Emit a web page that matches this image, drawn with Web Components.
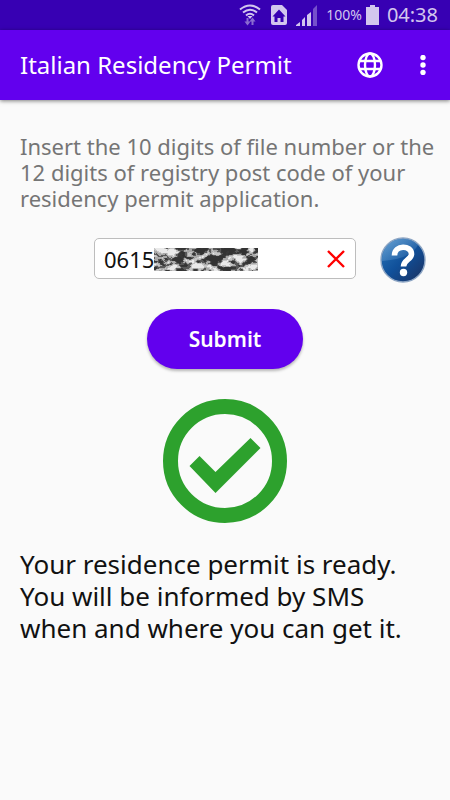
<!DOCTYPE html>
<html lang="en">
<head>
<meta charset="utf-8">
<meta name="viewport" content="width=device-width, initial-scale=1">
<title>Italian Residency Permit</title>
<style>
  html, body { margin: 0; min-height: 100%; background: #fafafa; }
  body { font-family: "Noto Sans", "Open Sans", sans-serif; color: #111; }
</style>
</head>
<body>
<permit-app></permit-app>
<script>
const define = (name, html) => customElements.define(name, class extends HTMLElement {
  constructor() {
    super();
    this.attachShadow({ mode: "open" }).innerHTML = html;
  }
});

define("status-bar", `
<style>
  :host { display: flex; align-items: center; justify-content: flex-end; height: 30px; padding-right: 12px; background: #3700b3; color: #d2c6ee; }
  svg { display: block; flex: none; }
  .wifi { margin-right: 10px; }
  .sim { margin-right: 9px; }
  .signal { margin-right: 9px; }
  .pct { font-size: 14px; line-height: 20px; }
  .battery { margin: 0 8px 0 4px; }
  time { font-size: 20px; line-height: 30px; }
</style>
<svg class="wifi" width="22" height="24" viewBox="0 0 22 24" fill="none" stroke="currentColor" stroke-width="2">
  <path d="M1 6.500Q11-1.500 21 6.500M4 9.500Q11 4 18 9.500M7 12.500Q11 9 15 12.500"/>
  <path d="M8.500 13h5L11 16z" fill="currentColor" stroke="none"/>
  <path d="M8.500 15v6M13.500 22v-6" stroke="#8a6cd0" stroke-width="2"/>
  <path d="M5.500 18.500h6L8.500 22.500zM10.500 18.500h6l-3-4z" fill="#8a6cd0" stroke="none"/>
</svg>
<svg class="sim" width="16" height="20" viewBox="0 0 16 20">
  <path d="M2 0h9l5 5v13a2 2 0 0 1-2 2H2a2 2 0 0 1-2-2V2a2 2 0 0 1 2-2z" fill="currentColor"/>
  <path d="M8 4.500L1.500 11.500H3.500V17H6.500V13H9.500V17H12.500V11.500H14.500z" fill="#3700b3"/>
</svg>
<svg class="signal" width="21" height="21" viewBox="0 0 21 21" fill="currentColor">
  <path d="M0 21v-1l4-3v4zM6 21v-6l3-3v9zM11 21V10l4-3v14z"/>
  <path d="M17 21V4l4-4v21z" fill="#7550cb"/>
</svg>
<span class="pct">100%</span>
<svg class="battery" width="13" height="20" viewBox="0 0 13 20" fill="currentColor"><path d="M4 0h5v2h4v18H0V2h4z"/></svg>
<time>04:38</time>`);

define("app-bar", `
<style>
  :host { display: flex; align-items: center; height: 70px; padding: 0 18px 0 20px; background: #6200ee; color: #fff; box-shadow: 0 1px 4px rgba(0,0,0,.5); }
  h1 { flex: 1; margin: 0; font-size: 24px; line-height: 32px; font-weight: 400; white-space: nowrap; }
  button { display: grid; place-items: center; border: 0; padding: 0; background: none; color: inherit; height: 48px; }
  .lang { width: 26px; margin-right: 31px; }
  .more { width: 18px; }
</style>
<h1><slot></slot></h1>
<button class="lang" aria-label="Language">
  <svg width="26" height="26" viewBox="0 0 26 26" fill="none" stroke="#fff" stroke-width="2.400">
    <circle cx="13" cy="13" r="11.500"/><ellipse cx="13" cy="13" rx="5" ry="11.500"/><path d="M2.500 9h21M2.500 17h21"/>
  </svg>
</button>
<button class="more" aria-label="More options">
  <svg width="6" height="20" viewBox="0 0 6 20" fill="#fff"><circle cx="3" cy="2.500" r="2.700"/><circle cx="3" cy="10" r="2.700"/><circle cx="3" cy="17.500" r="2.700"/></svg>
</button>`);

define("code-field", `
<style>
  :host { display: flex; align-items: center; position: relative; box-sizing: border-box; height: 41px; padding: 0 9px; background: #fff; border: 1px solid #bdbdbd; border-radius: 5px; }
  input { flex: 1; min-width: 0; border: 0; padding: 0; outline: 0; background: none; font: 22px/30px "Noto Sans", "Open Sans", sans-serif; color: #111; }
  .mask { position: absolute; left: 59px; top: 9px; }
  button { display: grid; place-items: center; width: 20px; height: 30px; border: 0; padding: 0; background: none; }
</style>
<input aria-label="File number or post code" value="0615" inputmode="numeric">
<svg class="mask" width="104" height="23" viewBox="0 0 104 23" aria-hidden="true">
  <filter id="n" x="0" y="0" width="100%" height="100%" color-interpolation-filters="sRGB">
    <feTurbulence type="fractalNoise" baseFrequency="0.09 0.13" numOctaves="3" seed="8"/>
    <feColorMatrix values="2.700 0 0 0 -0.850  2.700 0 0 0 -0.850  2.700 0 0 0 -0.850  0 0 0 0 1"/>
    <feComponentTransfer>
      <feFuncR type="discrete" tableValues=".2 .22 .35 .66 .78 .92"/>
      <feFuncG type="discrete" tableValues=".2 .22 .35 .66 .78 .92"/>
      <feFuncB type="discrete" tableValues=".2 .22 .35 .66 .78 .92"/>
    </feComponentTransfer>
  </filter>
  <rect width="104" height="23" filter="url(#n)"/>
</svg>
<button aria-label="Clear"><svg width="18" height="18" viewBox="0 0 18 18" stroke="#f00" stroke-width="2.400"><path d="M1 1L17 17M17 1L1 17"/></svg></button>`);

define("help-button", `
<style>
  :host { display: block; }
  button { display: block; border: 0; padding: 0; background: none; }
  svg { display: block; }
</style>
<button aria-label="Help">
<svg width="46" height="46" viewBox="0 0 46 46">
  <defs>
    <linearGradient id="g" x1="0" y1="0" x2="1" y2="1"><stop offset="0" stop-color="#2b78bb"/><stop offset=".5" stop-color="#10509a"/><stop offset="1" stop-color="#1c2f5c"/></linearGradient>
    <linearGradient id="s" x1="0" y1="0" x2="1" y2="1"><stop offset="0" stop-color="#8dbbe2" stop-opacity=".65"/><stop offset="1" stop-color="#5a94cc" stop-opacity=".1"/></linearGradient>
  </defs>
  <circle cx="23" cy="23" r="22" fill="url(#g)" stroke="#8ea6c4" stroke-width="1.400"/>
  <path d="M2 24A21 21 0 0 1 38 8Q31 22 2 24z" fill="url(#s)"/>
  <path d="M14.500 18.500C14.500 7.500 31.500 8 31.500 17C31.500 22.500 23.500 23 23.500 29.500" fill="none" stroke="#fff" stroke-width="5.600"/>
  <circle cx="23.500" cy="35.500" r="3.700" fill="#fff"/>
</svg>
</button>`);

define("submit-button", `
<style>
  :host { display: flex; justify-content: center; }
  button { height: 60px; padding: 0 42px; border: 0; border-radius: 30px; background: #6200ee; color: #fff; font: 600 21px/30px "Noto Sans", "Open Sans", sans-serif; box-shadow: 0 2px 3px rgba(0,0,0,.28); }
</style>
<button type="submit"><slot></slot></button>`);

define("result-panel", `
<style>
  :host { display: flex; flex-direction: column; }
  svg { display: block; align-self: center; margin-bottom: 25px; }
  p { margin: 0; font-size: 26px; line-height: 32px; }
</style>
<svg width="124" height="124" viewBox="0 0 124 124" role="img" aria-label="Approved">
  <circle cx="62" cy="62" r="54.500" fill="none" stroke="#2da12d" stroke-width="15"/>
  <path d="M26.500 67L36.500 57L52.500 73L87.500 39L97.500 49L52.500 94z" fill="#2da12d"/>
</svg>
<p><slot></slot></p>`);

define("permit-app", `
<style>
  :host { display: block; }
  main { padding: 33px 12px 20px 20px; }
  .intro { margin: 0 0 26px; font-size: 22px; line-height: 26px; color: #757575; }
  .row { display: grid; grid-template-columns: minmax(0, 1fr) 46px; gap: 24px; align-items: center; padding: 0 12px 0 74px; margin-bottom: 26px; }
  code-field { margin-bottom: 3px; }
  submit-button { margin: 0 8px 30px 0; }
  result-panel { margin-right: 8px; }
</style>
<status-bar></status-bar>
<app-bar>Italian Residency Permit</app-bar>
<main>
  <p class="intro">Insert the 10 digits of file number or the<br>12 digits of registry post code of your<br>residency permit application.</p>
  <div class="row"><code-field></code-field><help-button></help-button></div>
  <submit-button>Submit</submit-button>
  <result-panel>Your residence permit is ready.<br>You will be informed by SMS<br>when and where you can get it.</result-panel>
</main>`);
</script>
</body>
</html>
